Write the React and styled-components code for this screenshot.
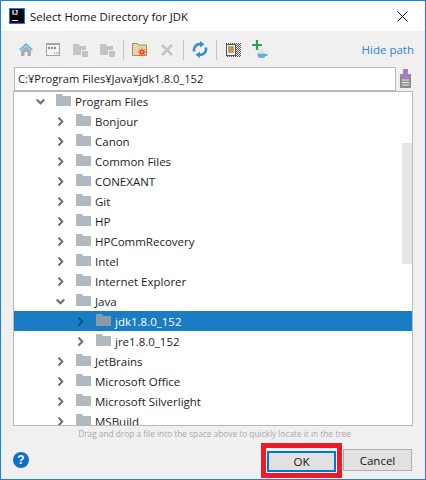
import styled, { createGlobalStyle } from 'styled-components'

const GlobalStyle = createGlobalStyle`
	html, body {
		margin: 0;
		padding: 0;
		background: #f0f0f0;
	}
	* {
		box-sizing: border-box;
	}
`

const Window = styled.div`
	width: 426px;
	height: 480px;
	display: flex;
	flex-direction: column;
	overflow: hidden;
	background: #f0f0f0;
	border: 1px solid #1883d7;
	font-family: "Open Sans", "Noto Sans", sans-serif;
	font-size: 11.5px;
	color: #1c1c1c;
`

const TitleBar = styled.div`
	height: 30px;
	flex: none;
	display: flex;
	align-items: center;
	background: #fff;
	padding-left: 8px;
	color: #111;
`

const AppLogo = styled.div`
	width: 16px;
	height: 16px;
	flex: none;
	background: #000;
	outline: 1px solid #087cfa;
	outline-offset: -1px;
	color: #fff;
	font-size: 7px;
	font-weight: 700;
	line-height: 10px;
	padding-left: 3px;
	font-family: "Liberation Sans", sans-serif;
	position: relative;
	&::after {
		content: '';
		position: absolute;
		left: 3px;
		bottom: 3px;
		width: 6px;
		height: 1px;
		background: #fff;
	}
`

const Title = styled.span`
	margin-left: 5px;
	font-size: 11.4px;
`

const CloseButton = styled.button`
	margin-left: auto;
	width: 46px;
	height: 30px;
	padding: 0;
	border: 0;
	background: transparent;
	display: flex;
	align-items: center;
	justify-content: center;
`

const Toolbar = styled.div`
	height: 35px;
	flex: none;
	display: flex;
	align-items: center;
	padding: 2px 11px 0 11.5px;
`

const ToolButton = styled.div`
	width: 27px;
	height: 20px;
	flex: none;
	display: flex;
	align-items: center;
	justify-content: center;
`

const ToolSeparator = styled.div`
	width: 1px;
	height: 20px;
	flex: none;
	margin: 0 2.5px;
	background: #c4c4c4;
`

const HidePath = styled.a`
	margin-left: auto;
	color: #2f80d6;
	font-size: 11.5px;
`

const PathRow = styled.div`
	flex: none;
	display: flex;
	align-items: center;
	height: 25px;
	padding-left: 13px;
`

const PathInput = styled.div`
	width: 382px;
	height: 24px;
	flex: none;
	border: 1px solid #b8b8b8;
	background: #fff;
	padding-left: 3px;
	font-size: 11.15px;
	line-height: 21px;
	white-space: nowrap;
`

const BookmarkButton = styled.div`
	margin-left: 3px;
	width: 13px;
	height: 20px;
	display: flex;
`

const Tree = styled.div`
	position: relative;
	flex: none;
	width: 400px;
	height: 335px;
	margin-left: 12px;
	border: 1px solid #b8b8b8;
	background: #fff;
	overflow: hidden;
`

const TreeList = styled.div`
	margin-top: -1px;
`

const Row = styled.div`
	height: 20px;
	display: flex;
	align-items: center;
	padding-left: ${props => 22 + props.$level * 20}px;
	background: ${props => (props.$selected ? '#1a7dc4' : 'transparent')};
	color: ${props => (props.$selected ? '#fff' : '#1c1c1c')};
	white-space: nowrap;
`

const Chevron = styled.svg`
	width: 9px;
	height: 11px;
	flex: none;
`

const Folder = styled.svg`
	width: 15px;
	height: 12px;
	flex: none;
	margin-left: 11px;
	margin-right: 4px;
	margin-top: -2px;
`

const ScrollBar = styled.div`
	position: absolute;
	right: 0;
	top: 51px;
	width: 10px;
	height: 121px;
	background: #e6e6e6;
`

const Hint = styled.div`
	flex: none;
	height: 15px;
	text-align: center;
	font-size: 8.3px;
	line-height: 15px;
	color: #a9a9a9;
	padding-left: 3px;
	white-space: nowrap;
`

const Footer = styled.div`
	flex: 1;
	display: flex;
	align-items: center;
	padding: 0 13px 0 12px;
`

const HelpButton = styled.div`
	width: 16px;
	height: 16px;
	border-radius: 50%;
	background: #0f6fc6;
	color: #fff;
	font-family: "Liberation Sans", sans-serif;
	font-weight: 700;
	font-size: 12px;
	line-height: 16px;
	text-align: center;
`

const Highlight = styled.div`
	margin-left: auto;
	width: 81px;
	height: 35px;
	border: 5px solid #ed1c24;
	margin-right: 1px;
	padding: 3px 1px;
	display: flex;
	align-items: stretch;
	background: #f0f0f0;
`

const Button = styled.button`
	width: 69px;
	height: ${props => (props.$primary ? '21px' : '22px')};
	flex: none;
	padding: 0;
	background: #e1e1e1;
	border: ${props => (props.$primary ? '2px solid #0078d7' : '1px solid #adadad')};
	font-family: inherit;
	font-size: 11.5px;
	color: #111;
`

const folders = [
	{ name: 'Program Files', level: 0, open: true },
	{ name: 'Bonjour', level: 1 },
	{ name: 'Canon', level: 1 },
	{ name: 'Common Files', level: 1 },
	{ name: 'CONEXANT', level: 1 },
	{ name: 'Git', level: 1 },
	{ name: 'HP', level: 1 },
	{ name: 'HPCommRecovery', level: 1 },
	{ name: 'Intel', level: 1 },
	{ name: 'Internet Explorer', level: 1 },
	{ name: 'Java', level: 1, open: true },
	{ name: 'jdk1.8.0_152', level: 2, selected: true },
	{ name: 'jre1.8.0_152', level: 2 },
	{ name: 'JetBrains', level: 1 },
	{ name: 'Microsoft Office', level: 1 },
	{ name: 'Microsoft Silverlight', level: 1 },
	{ name: 'MSBuild', level: 1 },
]

const GreyFolders = () => (
	<svg width="15" height="14" viewBox="0 0 15 14">
		<path d="M0 1h6l1 2h6v4H8v5H0z" fill="#c4c4c4" />
		<rect x="9" y="8" width="6" height="6" fill="#c4c4c4" />
	</svg>
)

const ToolIcons = {
	home: (
		<svg width="14" height="14" viewBox="0 0 14 14">
			<path d="M2 7.500L7 3l5 4.500V13H8.500V9h-3v4H2z" fill="#a3aeb6" />
			<path d="M0.700 7L7 1.200 13.300 7" fill="none" stroke="#56b4e8" strokeWidth="1.6" />
		</svg>
	),
	terminal: (
		<svg width="14" height="13" viewBox="0 0 14 13">
			<rect x="0.500" y="0.500" width="13" height="12" fill="#f4f4f4" stroke="#9aa7b0" />
			<rect x="0" y="0" width="14" height="2" fill="#9aa7b0" />
			<rect x="2" y="4" width="2" height="2" fill="#62b543" />
			<rect x="5" y="4" width="2" height="2" fill="#40b6e0" />
			<rect x="8" y="4" width="2" height="2" fill="#f26522" />
			<path d="M8 10h1M10 10h1M12 10h1" stroke="#777" />
		</svg>
	),
	newFolder: (
		<svg width="16" height="15" viewBox="0 0 16 15">
			<path d="M0.500 1.500h5l1 1.500h8v10.500h-14z" fill="#e6d6b0" stroke="#b08a4c" />
			<circle cx="10" cy="10" r="2.600" fill="#e84b23" />
			<path d="M10 5.500v9M5.500 10h9M7 7l6 6M13 7l-6 6" stroke="#e84b23" strokeWidth="0.8" />
			<circle cx="10" cy="10" r="1" fill="#f7d44c" />
		</svg>
	),
	remove: (
		<svg width="12" height="12" viewBox="0 0 12 12">
			<path d="M1 1l10 10M11 1L1 11" stroke="#c4c4c4" strokeWidth="2.6" />
		</svg>
	),
	refresh: (
		<svg width="16" height="17" viewBox="0 0 16 17">
			<path d="M2.200 10.500A5.800 5.800 0 0 1 8.500 3.200" fill="none" stroke="#3d8fc9" strokeWidth="2.6" />
			<path d="M8 0l4.500 3.300L8 6.600z" fill="#3d8fc9" />
			<path d="M13.800 6.500A5.800 5.800 0 0 1 7.500 13.800" fill="none" stroke="#3d8fc9" strokeWidth="2.600" />
			<path d="M8 10.400l-4.500 3.300L8 17z" fill="#3d8fc9" />
		</svg>
	),
	module: (
		<svg width="15" height="14" viewBox="0 0 15 14">
			<defs>
				<pattern id="checker" width="2" height="2" patternUnits="userSpaceOnUse">
					<rect width="1" height="1" fill="#555" />
					<rect x="1" y="1" width="1" height="1" fill="#555" />
				</pattern>
			</defs>
			<rect width="15" height="14" fill="url(#checker)" />
			<rect x="0.500" y="1.500" width="9" height="11" fill="#f0f0f0" stroke="#555" />
			<rect x="2.500" y="3.500" width="5" height="6" fill="#c49a5a" stroke="#a98040" strokeWidth="0.5" />
		</svg>
	),
	addJdk: (
		<svg width="16" height="19" viewBox="0 0 16 19">
			<path d="M5 0v10M0 5h10" stroke="#2ba14a" strokeWidth="2.200" />
			<path d="M7 9.500v3M9 9.500v3M11 9.500v3" stroke="#bdbdbd" strokeWidth="1" strokeDasharray="1 1" />
			<path d="M5.500 13.500h8V15a3 3 0 0 1-3 3h-2a3 3 0 0 1-3-3z" fill="#5fb0e0" />
			<path d="M13 14h2.500v2H13z" fill="#5fb0e0" />
		</svg>
	),
}

const ChevronIcon = ({ open, color }) => (
	<Chevron viewBox="0 0 9 11">
		<path
			d={open ? 'M0.700 3.500L4.500 7.300 8.300 3.500' : 'M2.500 1.500L6.300 5.500 2.500 9.500'}
			fill="none"
			stroke={color}
			strokeWidth="2"
		/>
	</Chevron>
)

const FolderIcon = ({ color }) => (
	<Folder viewBox="0 0 15 12">
		<path d="M0 0h6l1 2h8v10H0z" fill={color} />
	</Folder>
)

const TreeRow = ({ item }) => (
	<Row $level={item.level} $selected={item.selected}>
		<ChevronIcon open={item.open} color={item.selected ? '#0d4f80' : '#6e6e6e'} />
		<FolderIcon color={item.selected ? '#8a9aa6' : '#b0b9c0'} />
		{item.name}
	</Row>
)

const App = () => {
	return (
		<Window>
			<GlobalStyle />
			<TitleBar>
				<AppLogo>IJ</AppLogo>
				<Title>Select Home Directory for JDK</Title>
				<CloseButton aria-label="Close">
					<svg width="11" height="11" viewBox="0 0 11 11">
						<path d="M0.500 0.500l10 10M10.500 0.500l-10 10" stroke="#111" strokeWidth="1" />
					</svg>
				</CloseButton>
			</TitleBar>
			<Toolbar>
				<ToolButton>{ToolIcons.home}</ToolButton>
				<ToolButton>{ToolIcons.terminal}</ToolButton>
				<ToolButton><GreyFolders /></ToolButton>
				<ToolButton><GreyFolders /></ToolButton>
				<ToolSeparator />
				<ToolButton>{ToolIcons.newFolder}</ToolButton>
				<ToolButton>{ToolIcons.remove}</ToolButton>
				<ToolSeparator />
				<ToolButton>{ToolIcons.refresh}</ToolButton>
				<ToolSeparator />
				<ToolButton>{ToolIcons.module}</ToolButton>
				<ToolButton>{ToolIcons.addJdk}</ToolButton>
				<HidePath>Hide path</HidePath>
			</Toolbar>
			<PathRow>
				<PathInput>C:¥Program Files¥Java¥jdk1.8.0_152</PathInput>
				<BookmarkButton>
					<svg width="13" height="20" viewBox="0 0 13 20">
						<rect x="1" y="5" width="11" height="14" fill="#8c8c8c" />
						<path d="M3 11h7M3 13.500h7M3 16h7" stroke="#f0f0f0" />
						<path d="M4 0h5v5h3.500L6.500 11 0.500 5H4z" fill="#a77fc6" />
					</svg>
				</BookmarkButton>
			</PathRow>
			<Tree>
				<TreeList>
					{folders.map((item) => <TreeRow key={item.name} item={item} />)}
				</TreeList>
				<ScrollBar />
			</Tree>
			<Hint>Drag and drop a file into the space above to quickly locate it in the tree</Hint>
			<Footer>
				<HelpButton>?</HelpButton>
				<Highlight>
					<Button $primary>OK</Button>
				</Highlight>
				<Button>Cancel</Button>
			</Footer>
		</Window>
	)
}

export default App
